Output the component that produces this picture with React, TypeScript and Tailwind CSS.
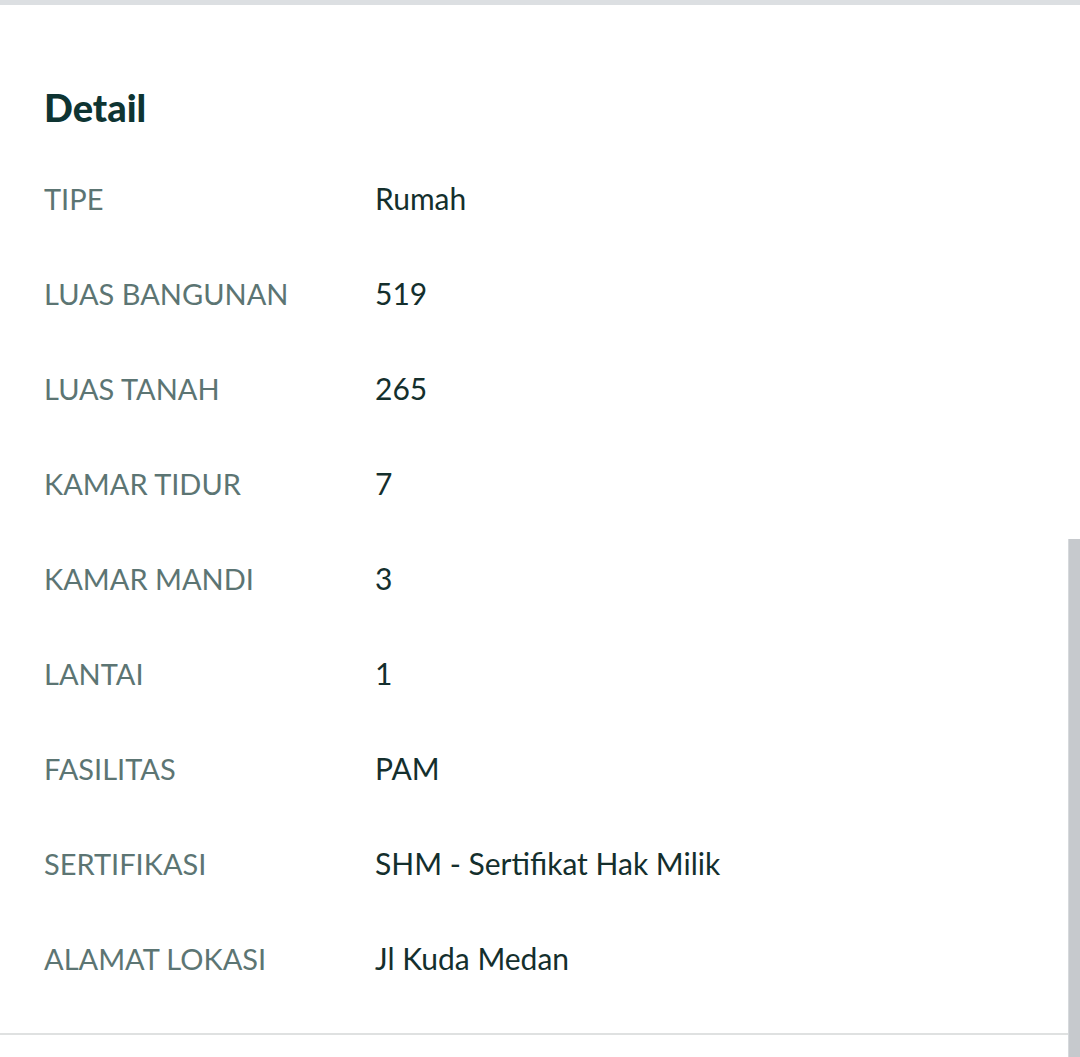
import React from "react";

const rows: [string, string][] = [
  ["TIPE", "Rumah"],
  ["LUAS BANGUNAN", "519"],
  ["LUAS TANAH", "265"],
  ["KAMAR TIDUR", "7"],
  ["KAMAR MANDI", "3"],
  ["LANTAI", "1"],
  ["FASILITAS", "PAM"],
  ["SERTIFIKASI", "SHM - Sertifikat Hak Milik"],
  ["ALAMAT LOKASI", "Jl Kuda Medan"],
];

export default function App() {
  return (
    <div className="relative w-[1080px] h-[1057px] bg-white overflow-hidden font-['Lato',sans-serif]">
      {/* garis atas */}
      <div className="h-[5px] bg-[#dcdfe2]" />

      <div className="pl-[44px] pt-[81px]">
        <h2 className="text-[38px] leading-[42px] font-black text-[#0e3432]">Detail</h2>

        <div className="mt-[23px] flex flex-col">
          {rows.map(([label, value]) => (
            <div key={label} className="flex items-center h-[95px]">
              <div className="w-[331px] text-[29px] text-[#5c7573]">{label}</div>
              <div className="text-[30px] text-[#142f2d]">{value}</div>
            </div>
          ))}
        </div>
      </div>

      {/* garis bawah */}
      <div className="absolute left-0 right-0 top-[1033px] h-[2px] bg-[#dfe1e1]" />

      {/* scrollbar */}
      <div className="absolute right-0 top-[539px] bottom-0 w-[12px] bg-[#c6c9cd] border-l border-[#d6d9dc]" />
    </div>
  );
}
